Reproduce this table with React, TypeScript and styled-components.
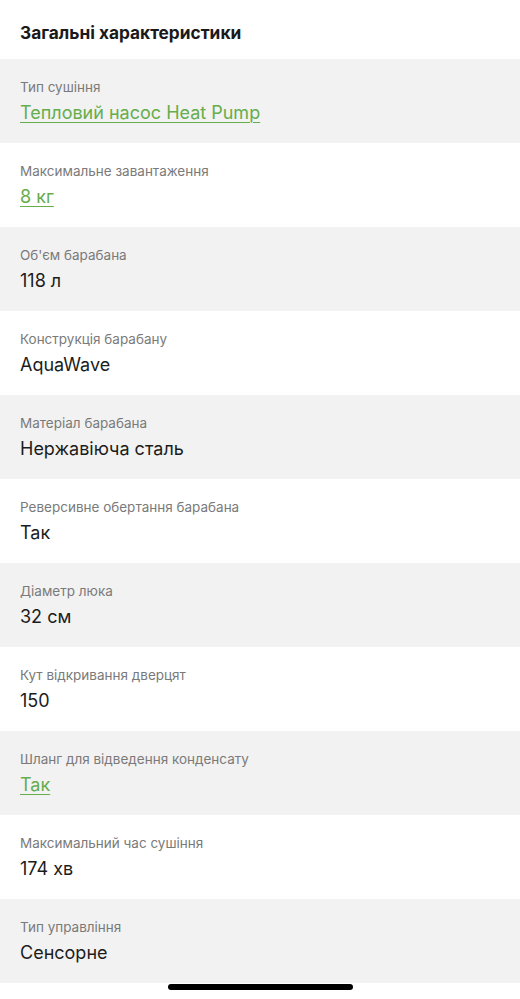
import React from "react";
import styled, { createGlobalStyle } from "styled-components";

const Global = createGlobalStyle`
  html, body { margin: 0; padding: 0; background: #fff; }
  body { font-family: Inter, "Noto Sans", sans-serif; -webkit-font-smoothing: antialiased; }
`;

const Page = styled.div`
  width: 520px;
  height: 999px;
  display: flex;
  flex-direction: column;
  background: #fff;
  overflow: hidden;
`;

const Title = styled.h2`
  margin: 0;
  height: 59px;
  padding: 5px 20px 0;
  display: flex;
  align-items: center;
  font-size: 17.3px;
  font-weight: 700;
  color: #1a1a1a;
  box-sizing: border-box;
`;

const Row = styled.div<{ $shade: boolean }>`
  height: 84px;
  box-sizing: border-box;
  padding: 20px 20px 0;
  background: ${(p) => (p.$shade ? "#f2f2f2" : "#fff")};
  display: flex;
  flex-direction: column;
`;

const Label = styled.div`
  font-size: 13.5px;
  line-height: 16px;
  color: #7a7a7a;
`;

const Value = styled.div<{ $link: boolean }>`
  margin-top: 7px;
  font-size: 18px;
  line-height: 22px;
  color: ${(p) => (p.$link ? "#66ad4c" : "#1c1c1c")};
  text-decoration: ${(p) => (p.$link ? "underline" : "none")};
  text-underline-offset: 3px;
  text-decoration-thickness: 1px;
`;

const HomeBarZone = styled.div`
  flex: 1;
  display: flex;
  justify-content: center;
  padding-top: 1px;
`;

const HomeBar = styled.div`
  width: 185px;
  height: 6px;
  border-radius: 3px;
  background: #000;
`;

const items: { label: string; value: string; link?: boolean }[] = [
  { label: "Тип сушіння", value: "Тепловий насос Heat Pump", link: true },
  { label: "Максимальне завантаження", value: "8 кг", link: true },
  { label: "Об'єм барабана", value: "118 л" },
  { label: "Конструкція барабану", value: "AquaWave" },
  { label: "Матеріал барабана", value: "Нержавіюча сталь" },
  { label: "Реверсивне обертання барабана", value: "Так" },
  { label: "Діаметр люка", value: "32 см" },
  { label: "Кут відкривання дверцят", value: "150" },
  { label: "Шланг для відведення конденсату", value: "Так", link: true },
  { label: "Максимальний час сушіння", value: "174 хв" },
  { label: "Тип управління", value: "Сенсорне" },
];

export default function App() {
  return (
    <Page>
      <Global />
      <Title>Загальні характеристики</Title>
      {items.map((it, i) => (
        <Row key={i} $shade={i % 2 === 0}>
          <Label>{it.label}</Label>
          <Value $link={!!it.link}>{it.value}</Value>
        </Row>
      ))}
      <HomeBarZone>
        <HomeBar />
      </HomeBarZone>
    </Page>
  );
}
